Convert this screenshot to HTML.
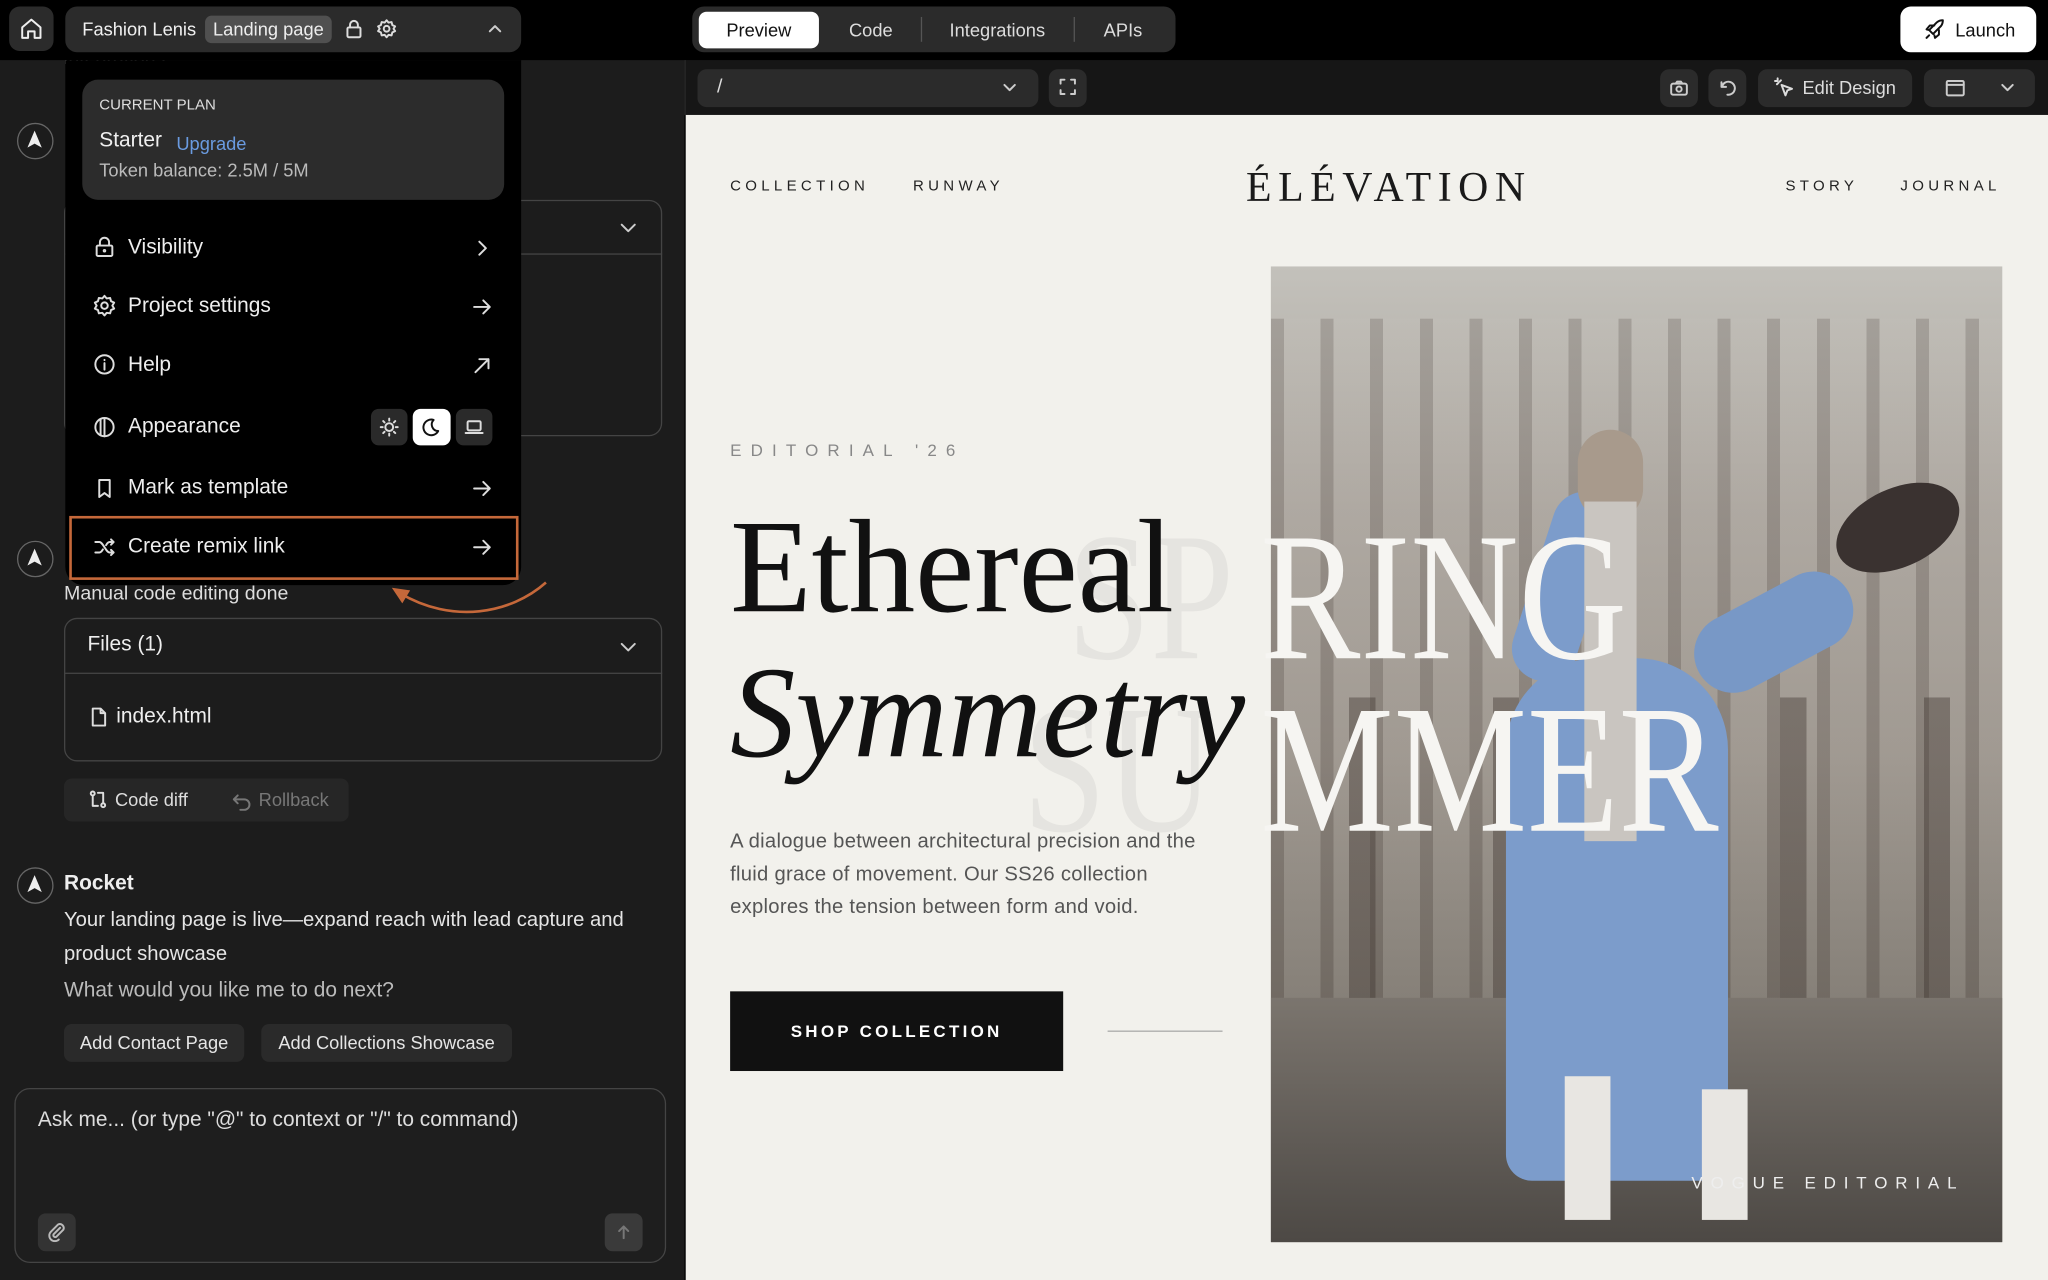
<!DOCTYPE html>
<html><head><meta charset="utf-8">
<style>
*{box-sizing:border-box;margin:0;padding:0}
html,body{width:2048px;height:1280px;overflow:hidden;background:#000}
#s{width:1568px;height:980px;transform:scale(1.306122);transform-origin:0 0;position:relative;font-family:"Liberation Sans",sans-serif;color:#eee;background:#000}
.a{position:absolute}
.serif{font-family:"Liberation Serif",serif}
svg{display:block}
.ic{stroke:currentColor;fill:none;stroke-width:1.5;stroke-linecap:round;stroke-linejoin:round}
.big{font-size:140px;line-height:1;transform:scaleX(.82);transform-origin:0 0}
</style></head><body><div id="s">
<!-- left panel -->
<div class="a" style="left:0;top:46px;width:524px;height:934px;background:#1c1c1c"></div>
<div class="a" style="left:49px;top:36px;font-size:15px;color:#ddd">lntegrations.</div>
<div class="a" style="left:13px;top:94px;width:28px;height:28px;border:1.5px solid #666;border-radius:50%;"><svg width="25" height="25" viewBox="0 0 25 25"><path d="M12.5 5 L18 18 L12.5 15 L7 18Z" fill="#eee"/></svg></div>
<div class="a" style="left:13px;top:414px;width:28px;height:28px;border:1.5px solid #666;border-radius:50%;"><svg width="25" height="25" viewBox="0 0 25 25"><path d="M12.5 5 L18 18 L12.5 15 L7 18Z" fill="#eee"/></svg></div>
<div class="a" style="left:49px;top:153px;width:458px;height:181px;border:1px solid #444;border-radius:10px"></div>
<div class="a" style="left:49px;top:194px;width:458px;border-top:1px solid #444"></div>
<svg class="a ic" style="left:473px;top:166px;color:#ccc" width="16" height="16" viewBox="0 0 16 16"><path d="M3 6l5 5 5-5"/></svg>
<div class="a" style="left:49px;top:446px;font-size:15px;color:#ddd">Manual code editing done</div>
<div class="a" style="left:49px;top:473px;width:458px;height:110px;border:1px solid #444;border-radius:10px"></div>
<div class="a" style="left:49px;top:515px;width:458px;border-top:1px solid #444"></div>
<div class="a" style="left:67px;top:485px;font-size:16px;color:#eee">Files (1)</div>
<svg class="a ic" style="left:473px;top:487px;color:#ccc" width="16" height="16" viewBox="0 0 16 16"><path d="M3 6l5 5 5-5"/></svg>
<svg class="a ic" style="left:68px;top:541px;color:#ddd" width="15" height="16" viewBox="0 0 15 16"><path d="M3 1.5h6l3.5 3.5v9.5h-9.5z M9 1.5v3.5h3.5"/></svg>
<div class="a" style="left:89px;top:540px;font-size:16px;color:#eee">index.html</div>
<div class="a" style="left:49px;top:596px;width:218px;height:33px;background:#262626;border-radius:6px"></div>
<svg class="a ic" style="left:67px;top:604px;color:#ddd" width="16" height="16" viewBox="0 0 16 16"><circle cx="4" cy="3.5" r="1.5"/><circle cx="12" cy="12.5" r="1.5"/><path d="M4 5v8h4M12 11V3H8"/></svg>
<div class="a" style="left:88px;top:604px;font-size:14px;color:#ddd">Code diff</div>
<svg class="a ic" style="left:177px;top:605px;color:#777" width="16" height="16" viewBox="0 0 16 16"><path d="M5 4L2 7l3 3M2 7h8a4 4 0 010 8H7"/></svg>
<div class="a" style="left:198px;top:604px;font-size:14px;color:#777">Rollback</div>
<div class="a" style="left:13px;top:664px;width:28px;height:28px;border:1.5px solid #666;border-radius:50%;"><svg width="25" height="25" viewBox="0 0 25 25"><path d="M12.5 5 L18 18 L12.5 15 L7 18Z" fill="#eee"/></svg></div>
<div class="a" style="left:49px;top:668px;font-size:16px;font-weight:bold;color:#eee">Rocket</div>
<div class="a" style="left:49px;top:692px;width:455px;font-size:15.5px;line-height:26px;color:#e5e5e5">Your landing page is live—expand reach with lead capture and product showcase</div>
<div class="a" style="left:49px;top:750px;font-size:16px;color:#bbb">What would you like me to do next?</div>
<div class="a" style="left:49px;top:784px;width:138px;height:29px;background:#2a2a2a;border-radius:6px;font-size:14px;line-height:29px;text-align:center;color:#e5e5e5">Add Contact Page</div>
<div class="a" style="left:200px;top:784px;width:192px;height:29px;background:#2a2a2a;border-radius:6px;font-size:14px;line-height:29px;text-align:center;color:#e5e5e5">Add Collections Showcase</div>
<div class="a" style="left:11px;top:833px;width:499px;height:134px;border:1px solid #444;border-radius:12px;background:#1e1e1e"></div>
<div class="a" style="left:29px;top:849px;font-size:16px;color:#ddd">Ask me... (or type "@" to context or "/" to command)</div>
<div class="a" style="left:29px;top:929px;width:29px;height:29px;background:#333;border-radius:6px"></div>
<svg class="a ic" style="left:36px;top:936px;color:#bbb" width="15" height="15" viewBox="0 0 15 15"><path d="M10 4l-5 5a1.5 1.5 0 002 2l5.5-5.5a3 3 0 00-4-4L3 7a4 4 0 006 6"/></svg>
<div class="a" style="left:463px;top:929px;width:29px;height:29px;background:#3a3a3a;border-radius:6px"></div>
<svg class="a ic" style="left:470px;top:936px;color:#777" width="15" height="15" viewBox="0 0 15 15"><path d="M7.5 12V3M4 6.5l3.5-3.5 3.5 3.5"/></svg>
<svg class="a" style="left:296px;top:440px" width="130" height="40" viewBox="0 0 130 40"><path d="M122 6 C95 30 50 38 10 14" stroke="#c5683a" stroke-width="2" fill="none"/><path d="M4 10 L18 12 L12 22Z" fill="#c5683a"/></svg>
<!-- top bar -->
<div class="a" style="left:0;top:0;width:1568px;height:46px;background:#000"></div>
<div class="a" style="left:7px;top:5px;width:34px;height:34px;background:#2b2b2b;border-radius:8px"></div>
<svg class="a ic" style="left:14px;top:12px;color:#eee" width="20" height="20" viewBox="0 0 20 20"><path d="M3 9l7-6 7 6v8h-4.5v-5h-5v5H3z"/></svg>
<div class="a" style="left:50px;top:5px;width:349px;height:35px;background:#2b2b2b;border-radius:9px"></div>
<div class="a" style="left:63px;top:14px;font-size:14px;color:#f0f0f0">Fashion Lenis</div>
<div class="a" style="left:157px;top:12px;width:97px;height:21px;background:#505050;border-radius:5px;font-size:14px;line-height:21px;text-align:center;color:#eee">Landing page</div>
<svg class="a ic" style="left:263px;top:14px;color:#ddd" width="16" height="16" viewBox="0 0 16 16"><rect x="3" y="7" width="10" height="7.5" rx="1"/><path d="M5 7V5a3 3 0 016 0v2"/></svg>
<svg class="a ic" style="left:288px;top:14px;color:#ddd" width="16" height="16" viewBox="0 0 16 16"><circle cx="8" cy="8" r="2.2"/><path d="M8 1.5l1.5 1.8 2.3-.4.6 2.3 2.1 1L13.3 8l1.2 1.8-2.1 1-.6 2.3-2.3-.4L8 14.5l-1.5-1.8-2.3.4-.6-2.3-2.1-1L2.7 8 1.5 6.2l2.1-1 .6-2.3 2.3.4z"/></svg>
<svg class="a ic" style="left:372px;top:15px;color:#ccc" width="14" height="14" viewBox="0 0 14 14"><path d="M3 9l4-4 4 4"/></svg>
<div class="a" style="left:530px;top:5px;width:370px;height:35px;background:#2b2b2b;border-radius:9px"></div>
<div class="a" style="left:535px;top:9px;width:92px;height:28px;background:#fff;border-radius:6px;font-size:14px;line-height:28px;text-align:center;color:#111">Preview</div>
<div class="a" style="left:650px;top:15px;font-size:14px;color:#ddd">Code</div>
<div class="a" style="left:705px;top:13px;height:19px;border-left:1px solid #555"></div>
<div class="a" style="left:727px;top:15px;font-size:14px;color:#ddd">Integrations</div>
<div class="a" style="left:822px;top:13px;height:19px;border-left:1px solid #555"></div>
<div class="a" style="left:845px;top:15px;font-size:14px;color:#ddd">APIs</div>
<div class="a" style="left:1455px;top:5px;width:104px;height:35px;background:#fff;border-radius:8px"></div>
<svg class="a ic" style="left:1473px;top:14px;color:#111" width="17" height="17" viewBox="0 0 17 17"><path d="M6 11l-2-2 6-6c1.5-1.2 3.5-1.5 4.5-1.5 0 1-.3 3-1.5 4.5L7 12z M4 9L2 8.5l2.5-3H8 M8 13l.5 2 3-2.5V9 M4 13l-2 2"/></svg>
<div class="a" style="left:1497px;top:15px;font-size:14px;color:#111">Launch</div>
<!-- preview toolbar -->
<div class="a" style="left:524px;top:46px;width:1044px;height:42px;background:#161616;border-left:1px solid #2a2a2a"></div>
<div class="a" style="left:534px;top:53px;width:261px;height:29px;background:#2b2b2b;border-radius:7px"></div>
<div class="a" style="left:549px;top:58px;font-size:15px;color:#ddd">/</div>
<svg class="a ic" style="left:766px;top:60px;color:#ccc" width="14" height="14" viewBox="0 0 14 14"><path d="M3 5l4 4 4-4"/></svg>
<div class="a" style="left:803px;top:53px;width:29px;height:29px;background:#2b2b2b;border-radius:7px"></div>
<svg class="a ic" style="left:811px;top:60px;color:#ccc" width="13" height="13" viewBox="0 0 13 13"><path d="M1 4V1h3M9 1h3v3M12 9v3H9M4 12H1V9"/></svg>
<div class="a" style="left:1271px;top:53px;width:29px;height:29px;background:#2b2b2b;border-radius:7px"></div>
<svg class="a ic" style="left:1278px;top:60px;color:#ccc" width="15" height="15" viewBox="0 0 15 15"><rect x="1.5" y="4" width="12" height="8.5" rx="1.5"/><circle cx="7.5" cy="8.2" r="2"/><path d="M5 4l1-1.5h3L10 4"/></svg>
<div class="a" style="left:1308px;top:53px;width:29px;height:29px;background:#2b2b2b;border-radius:7px"></div>
<svg class="a ic" style="left:1315px;top:60px;color:#ccc" width="15" height="15" viewBox="0 0 15 15"><path d="M3 3v3.5h3.5M3.5 6A5 5 0 117.5 12.5"/></svg>
<div class="a" style="left:1346px;top:53px;width:118px;height:29px;background:#2b2b2b;border-radius:7px"></div>
<svg class="a ic" style="left:1358px;top:59px;color:#ddd" width="16" height="16" viewBox="0 0 16 16"><path d="M6 6l8 3-3.5 1.2L9 14z M3 1v2M1 3h2M5.5 2.5l-1 1M2.5 5.5l1-1"/></svg>
<div class="a" style="left:1380px;top:59px;font-size:14px;color:#ddd">Edit Design</div>
<div class="a" style="left:1473px;top:53px;width:85px;height:29px;background:#2b2b2b;border-radius:7px"></div>
<svg class="a ic" style="left:1489px;top:60px;color:#ccc" width="16" height="15" viewBox="0 0 16 15"><rect x="1.5" y="2" width="13" height="11" rx="1"/><path d="M1.5 5h13"/></svg>
<svg class="a ic" style="left:1530px;top:60px;color:#ccc" width="14" height="14" viewBox="0 0 14 14"><path d="M3 5l4 4 4-4"/></svg>
<!-- site preview -->
<div class="a" style="left:525px;top:88px;width:1043px;height:892px;background:#f2f1ec;overflow:hidden">
 <div class="a" style="left:34px;top:49px;font-size:11.5px;letter-spacing:3.3px;color:#222">COLLECTION</div>
 <div class="a" style="left:174px;top:49px;font-size:11.5px;letter-spacing:3.3px;color:#222">RUNWAY</div>
 <div class="a serif" style="left:429px;top:37px;font-size:32px;letter-spacing:5px;color:#1a1a1a">ÉLÉVATION</div>
 <div class="a" style="left:842px;top:49px;font-size:11.5px;letter-spacing:3.3px;color:#222">STORY</div>
 <div class="a" style="left:930px;top:49px;font-size:11.5px;letter-spacing:3.3px;color:#222">JOURNAL</div>
 <div class="a" style="left:34px;top:249px;font-size:13px;letter-spacing:7px;color:#888">EDITORIAL '26</div>
 <!-- photo -->
 <div class="a" style="left:448px;top:116px;width:560px;height:747px;overflow:hidden;background:linear-gradient(180deg,#c3c1bb 0%,#aba59e 25%,#9b948c 50%,#7d776f 75%,#5f5a55 100%)">
  <div class="a" style="left:0;top:40px;width:560px;height:520px;background:repeating-linear-gradient(90deg,rgba(70,60,55,.22) 0 10px,rgba(200,195,188,.12) 10px 38px)"></div>
  <div class="a" style="left:30px;top:330px;width:500px;height:240px;background:repeating-linear-gradient(90deg,transparent 0 30px,rgba(60,50,45,.4) 30px 50px,transparent 50px 110px)"></div>
  <div class="a" style="left:0;top:560px;width:560px;height:190px;background:linear-gradient(180deg,#7b756e,#4c4844)"></div>
  <div class="a" style="left:180px;top:300px;width:170px;height:400px;background:#7c9ccb;border-radius:70px 70px 20px 20px"></div>
  <div class="a" style="left:320px;top:250px;width:130px;height:60px;background:#7898c6;transform:rotate(-28deg);border-radius:30px"></div>
  <div class="a" style="left:200px;top:170px;width:50px;height:150px;background:#7c9ccb;transform:rotate(18deg);border-radius:25px"></div>
  <div class="a" style="left:235px;top:125px;width:50px;height:70px;background:#a89a8c;border-radius:25px"></div>
  <div class="a" style="left:240px;top:180px;width:40px;height:260px;background:#c9c5c0"></div>
  <div class="a" style="left:430px;top:170px;width:100px;height:60px;background:#3a3230;border-radius:50%;transform:rotate(-25deg)"></div>
  <div class="a" style="left:225px;top:620px;width:35px;height:110px;background:#e8e6e2"></div>
  <div class="a" style="left:330px;top:630px;width:35px;height:100px;background:#e8e6e2"></div>
  <div class="a" style="left:322px;top:694px;font-size:13px;letter-spacing:6px;color:#eee">VOGUE EDITORIAL</div>
 </div>
 <div class="a serif big" style="left:292px;top:300px;color:rgba(0,0,0,.05)">SP</div>
 <div class="a serif big" style="left:440px;top:300px;color:#f6f5f2">RING</div>
 <div class="a serif big" style="left:258px;top:432px;color:rgba(0,0,0,.05)">SU</div>
 <div class="a serif big" style="left:440px;top:432px;color:#f6f5f2">MMER</div>
 <div class="a serif" style="left:34px;top:296px;font-size:102px;line-height:1;color:#111">Ethereal</div>
 <div class="a serif" style="left:34px;top:408px;font-size:100px;line-height:1;color:#111;font-style:italic">Symmetry</div>
 <div class="a" style="left:34px;top:544px;width:370px;font-size:15.5px;line-height:25px;color:#555;letter-spacing:.2px">A dialogue between architectural precision and the fluid grace of movement. Our SS26 collection explores the tension between form and void.</div>
 <div class="a" style="left:34px;top:671px;width:255px;height:61px;background:#111;color:#fff;font-size:13px;letter-spacing:2.5px;line-height:61px;text-align:center;font-weight:bold">SHOP COLLECTION</div>
 <div class="a" style="left:323px;top:701px;width:88px;border-top:1px solid #aaa"></div>
</div>
<!-- dropdown -->
<div class="a" style="left:50px;top:46px;width:349px;height:402px;background:#000;border-radius:0 0 14px 14px"></div>
<div class="a" style="left:63px;top:61px;width:323px;height:92px;background:#2c2c2c;border-radius:12px"></div>
<div class="a" style="left:76px;top:75px;font-size:11.5px;color:#ddd">CURRENT PLAN</div>
<div class="a" style="left:76px;top:99px;font-size:16px;color:#f0f0f0">Starter</div>
<div class="a" style="left:135px;top:102px;font-size:14px;color:#6a9be0">Upgrade</div>
<div class="a" style="left:76px;top:122px;font-size:14px;color:#bbb">Token balance: 2.5M / 5M</div>
<svg class="a ic" style="left:71px;top:180px;color:#ddd" width="18" height="18" viewBox="0 0 18 18"><rect x="3" y="8" width="12" height="8" rx="1"/><path d="M5.5 8V5.5a3.5 3.5 0 017 0V8"/><circle cx="9" cy="12" r=".6"/></svg>
<div class="a" style="left:98px;top:181px;font-size:16px;color:#eee">Visibility</div>
<svg class="a ic" style="left:361px;top:182px;color:#ddd" width="16" height="16" viewBox="0 0 16 16"><path d="M6 3l5 5-5 5"/></svg>
<svg class="a ic" style="left:71px;top:225px;color:#ddd" width="18" height="18" viewBox="0 0 18 18"><circle cx="9" cy="9" r="2.5"/><path d="M9 1.5l1.7 2 2.6-.4.7 2.5 2.4 1.1L15 9l1.4 2.3-2.4 1.1-.7 2.5-2.6-.4-1.7 2-1.7-2-2.6.4-.7-2.5-2.4-1.1L3 9 1.6 6.7 4 5.6l.7-2.5 2.6.4z"/></svg>
<div class="a" style="left:98px;top:226px;font-size:16px;color:#eee">Project settings</div>
<svg class="a ic" style="left:361px;top:227px;color:#ddd" width="16" height="16" viewBox="0 0 16 16"><path d="M2 8h12M9 3l5 5-5 5"/></svg>
<svg class="a ic" style="left:71px;top:270px;color:#ddd" width="18" height="18" viewBox="0 0 18 18"><circle cx="9" cy="9" r="7"/><path d="M9 8v5M9 5.5v.2"/></svg>
<div class="a" style="left:98px;top:271px;font-size:16px;color:#eee">Help</div>
<svg class="a ic" style="left:361px;top:272px;color:#ddd" width="16" height="16" viewBox="0 0 16 16"><path d="M3 13L13 3M6 3h7v7"/></svg>
<svg class="a ic" style="left:71px;top:318px;color:#ddd" width="18" height="18" viewBox="0 0 18 18"><circle cx="9" cy="9" r="7"/><path d="M9 2v14M6 3v12"/></svg>
<div class="a" style="left:98px;top:318px;font-size:16px;color:#eee">Appearance</div>
<div class="a" style="left:284px;top:313px;width:28px;height:28px;background:#2a2a2a;border-radius:6px"></div>
<svg class="a ic" style="left:290px;top:319px;color:#ddd" width="16" height="16" viewBox="0 0 16 16"><circle cx="8" cy="8" r="3"/><path d="M8 1.5v1.5M8 13v1.5M1.5 8H3M13 8h1.5M3.4 3.4l1 1M11.6 11.6l1 1M3.4 12.6l1-1M11.6 4.4l1-1"/></svg>
<div class="a" style="left:316px;top:313px;width:29px;height:28px;background:#fff;border-radius:6px"></div>
<svg class="a ic" style="left:322px;top:319px;color:#111" width="16" height="16" viewBox="0 0 16 16"><path d="M10 2.5A6 6 0 1013.5 11 5 5 0 0110 2.5z"/></svg>
<div class="a" style="left:349px;top:313px;width:28px;height:28px;background:#2a2a2a;border-radius:6px"></div>
<svg class="a ic" style="left:355px;top:319px;color:#ddd" width="16" height="16" viewBox="0 0 16 16"><rect x="3" y="3.5" width="10" height="7" rx="1"/><path d="M1.5 12.5h13"/></svg>
<svg class="a ic" style="left:71px;top:365px;color:#ddd" width="18" height="18" viewBox="0 0 18 18"><path d="M5 2.5h8v13l-4-3-4 3z"/></svg>
<div class="a" style="left:98px;top:365px;font-size:16px;color:#eee">Mark as template</div>
<svg class="a ic" style="left:361px;top:366px;color:#ddd" width="16" height="16" viewBox="0 0 16 16"><path d="M2 8h12M9 3l5 5-5 5"/></svg>
<div class="a" style="left:53px;top:395px;width:344px;height:49px;border:2px solid #c5683a"></div>
<svg class="a ic" style="left:71px;top:410px;color:#ddd" width="18" height="18" viewBox="0 0 18 18"><path d="M2 5h3c3 0 5 8 8 8h3M2 13h3c1.2 0 2-1 2.8-2.4M10.2 7.4C11 6 11.8 5 13 5h3M14 3l2 2-2 2M14 11l2 2-2 2"/></svg>
<div class="a" style="left:98px;top:410px;font-size:16px;color:#eee">Create remix link</div>
<svg class="a ic" style="left:361px;top:411px;color:#ddd" width="16" height="16" viewBox="0 0 16 16"><path d="M2 8h12M9 3l5 5-5 5"/></svg>
</div></body></html>
